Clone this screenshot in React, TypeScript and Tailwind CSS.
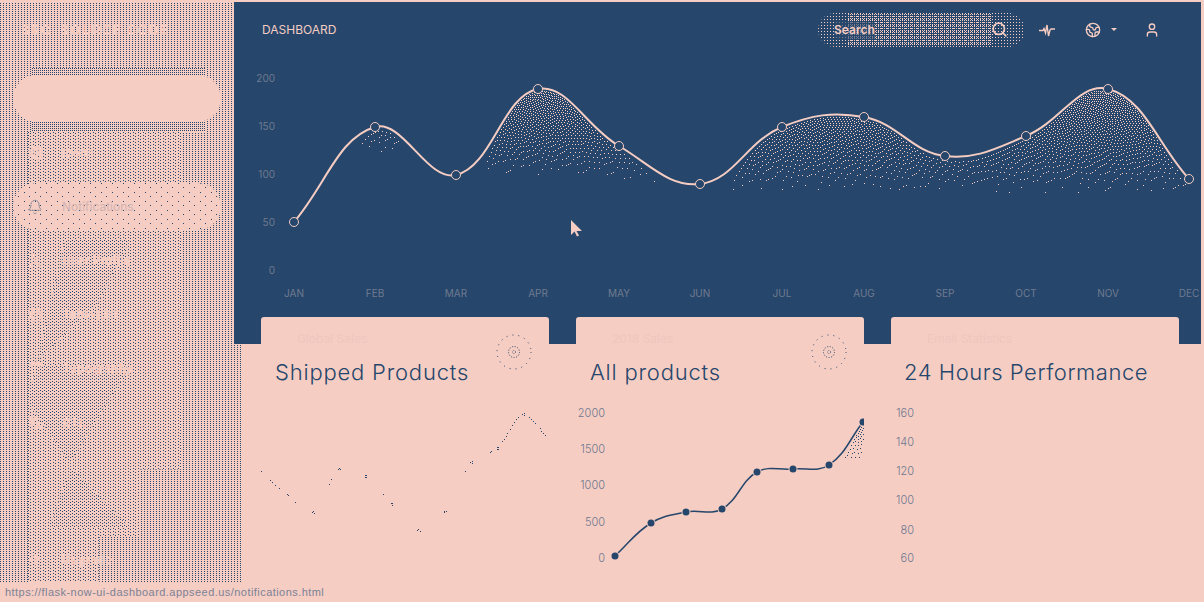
import { ArrowUp, Atom, Bell, Earth, LayoutList, Search, Type, User, Languages } from "lucide-react";

type P = [number, number];

const NAVY = "#26466b";
const PINK = "#f5cdc3";
const MUTED = "#6f7a8f";

const months = ["JAN", "FEB", "MAR", "APR", "MAY", "JUN", "JUL", "AUG", "SEP", "OCT", "NOV", "DEC"];
const salesX = [294, 375, 456, 538, 619, 700, 782, 864, 945, 1026, 1108, 1189];
const salesY = [222, 127, 175, 89, 146, 184, 127, 117, 156, 136, 89, 179];
const salesPts: P[] = salesX.map((x, i) => [x, salesY[i]]);

const productPts: P[] = [
  [615, 556], [651, 523], [686, 512], [722, 509], [757, 472], [793, 469], [829, 465], [863, 422],
];

// dots that survive of the first card's line, read off the reference (page coords)
const shippedDots: P[] = [
  [261, 471], [270, 480], [272, 482], [275, 485], [279, 488], [287, 494], [288, 495], [295, 502],
  [312, 512], [313, 511], [314, 513], [329, 484], [331, 479], [339, 468], [338, 469], [340, 469],
  [365, 475], [366, 475], [365, 477], [366, 477], [383, 494], [391, 503], [392, 503], [392, 505],
  [417, 530], [418, 529], [420, 531], [444, 511], [444, 512], [446, 511], [465, 471], [470, 462],
  [472, 461], [472, 463], [490, 452], [491, 451], [497, 447], [497, 449], [498, 447], [498, 449],
  [502, 441], [504, 439], [506, 436], [507, 433], [510, 429], [512, 425], [514, 422], [516, 419],
  [518, 417], [522, 414], [524, 413], [524, 415], [529, 417], [531, 419], [533, 421], [535, 423],
  [540, 428], [541, 431], [543, 433], [545, 435],
];

// chart.js style bezier, tension 0.4
function controls(pts: P[], t = 0.4) {
  return pts.map((p, i) => {
    const a = pts[i - 1] ?? p;
    const b = pts[i + 1] ?? p;
    const d01 = Math.hypot(p[0] - a[0], p[1] - a[1]);
    const d12 = Math.hypot(b[0] - p[0], b[1] - p[1]);
    const sum = d01 + d12 || 1;
    const fa = (t * d01) / sum;
    const fb = (t * d12) / sum;
    return {
      prev: [p[0] - fa * (b[0] - a[0]), p[1] - fa * (b[1] - a[1])] as P,
      next: [p[0] + fb * (b[0] - a[0]), p[1] + fb * (b[1] - a[1])] as P,
    };
  });
}

function curvePath(pts: P[]) {
  const c = controls(pts);
  let d = `M${pts[0][0]} ${pts[0][1]}`;
  for (let i = 1; i < pts.length; i++) {
    d += `C${c[i - 1].next[0]} ${c[i - 1].next[1]} ${c[i].prev[0]} ${c[i].prev[1]} ${pts[i][0]} ${pts[i][1]}`;
  }
  return d;
}

function curveHeights(pts: P[]) {
  const c = controls(pts);
  const ys: Record<number, number> = {};
  for (let i = 1; i < pts.length; i++) {
    const p0 = pts[i - 1];
    const p1 = c[i - 1].next;
    const p2 = c[i].prev;
    const p3 = pts[i];
    for (let s = 0; s <= 200; s++) {
      const t = s / 200;
      const u = 1 - t;
      const x = u * u * u * p0[0] + 3 * u * u * t * p1[0] + 3 * u * t * t * p2[0] + t * t * t * p3[0];
      const y = u * u * u * p0[1] + 3 * u * u * t * p1[1] + 3 * u * t * t * p2[1] + t * t * t * p3[1];
      ys[Math.round(x)] = y;
    }
  }
  return ys;
}

// error diffusion, the fill under a line is stippled in the picture
function stipple(pts: P[], y0: number, y1: number, density: (x: number, y: number) => number) {
  const top = curveHeights(pts);
  const x0 = pts[0][0];
  const x1 = pts[pts.length - 1][0];
  const w = x1 - x0 + 3;
  let row = new Array(w).fill(0);
  let below = new Array(w).fill(0);
  let d = "";
  for (let y = y0; y < y1; y++) {
    for (let i = 1; i < w - 1; i++) {
      const x = x0 + i - 1;
      const h = top[x];
      const want = h !== undefined && y > h + 1 ? density(x, y) : 0;
      if (want <= 0) continue;
      const v = want + row[i];
      const on = v > 0.5;
      if (on) d += `M${x} ${y}h1v1h-1z`;
      const e = v - (on ? 1 : 0);
      row[i + 1] += (e * 7) / 16;
      below[i - 1] += (e * 3) / 16;
      below[i] += (e * 5) / 16;
      below[i + 1] += e / 16;
    }
    row = below;
    below = new Array(w).fill(0);
  }
  return d;
}

function lerp(stops: P[], x: number) {
  if (x <= stops[0][0]) return stops[0][1];
  for (let i = 1; i < stops.length; i++) {
    if (x <= stops[i][0]) {
      const t = (x - stops[i - 1][0]) / (stops[i][0] - stops[i - 1][0]);
      return stops[i - 1][1] + t * (stops[i][1] - stops[i - 1][1]);
    }
  }
  return stops[stops.length - 1][1];
}

const fadeStops: P[] = [[294, 150], [390, 156], [450, 158], [480, 178], [620, 184], [700, 195], [1189, 198]];

const salesFill = stipple(salesPts, 85, 200, (x, y) => {
  const end = lerp(fadeStops, x);
  return 0.27 * Math.pow(Math.max(0, (end - y) / (end - 88)), 1.25);
});

const productFill = stipple(productPts, 420, 458, (x, y) => (x < 842 ? 0 : 0.28 * Math.max(0.25, (458 - y) / 38)));

function SalesChart() {
  return (
    <svg viewBox="234 62 967 282" className="block w-[967px] h-[282px]">
      <path d={salesFill} fill={PINK} shapeRendering="crispEdges" />
      <path d={curvePath(salesPts)} fill="none" stroke={PINK} strokeWidth="2" />
      {salesPts.map(([x, y]) => (
        <circle key={x} cx={x} cy={y} r="4.5" fill={NAVY} stroke={PINK} strokeWidth="1" />
      ))}
      {[200, 150, 100, 50, 0].map((v, i) => (
        <text key={v} x="275" y={82 + i * 48} textAnchor="end" fontSize="10" fill={MUTED} fontFamily="Inter, sans-serif">
          {v}
        </text>
      ))}
      {months.map((m, i) => (
        <text key={m} x={salesX[i]} y="297" textAnchor="middle" fontSize="10" fill={MUTED} fontFamily="Inter, sans-serif">
          {m}
        </text>
      ))}
    </svg>
  );
}

function AxisLabels({ x, ticks }: { x: number; ticks: [string, number][] }) {
  return (
    <>
      {ticks.map(([t, y]) => (
        <text key={t} x={x} y={y + 4} textAnchor="end" fontSize="11" fontWeight="300" fill="#6d7890" fontFamily="Inter, sans-serif">
          {t}
        </text>
      ))}
    </>
  );
}

function GearRing() {
  return (
    <svg viewBox="0 0 36 36" className="absolute right-[17px] top-[17px] w-[36px] h-[36px]">
      <circle cx="18" cy="18" r="17" fill="none" stroke={NAVY} strokeWidth="1" strokeDasharray="1 5" />
      <circle cx="18" cy="18" r="5.5" fill="none" stroke={NAVY} strokeWidth="1" strokeDasharray="1 1.6" />
      <circle cx="18" cy="18" r="1.6" fill="none" stroke={NAVY} strokeWidth="0.7" strokeDasharray="1 1" />
    </svg>
  );
}

function Card({ category, title, titleClass, gear, children }: { category: string; title: string; titleClass: string; gear?: boolean; children?: React.ReactNode }) {
  return (
    <section className="relative w-[288px] rounded-t-[3px] bg-[#f5cdc3] pl-[14px] pt-[15px]">
      <p className="h-[14px] text-[12px] leading-[14px] text-[#efc7be] pl-[22px]" style={{ fontFamily: "Inter, sans-serif" }}>
        {category}
      </p>
      <h2 className={titleClass} style={{ fontFamily: "Inter, sans-serif" }}>
        {title}
      </h2>
      {gear && <GearRing />}
      {children}
    </section>
  );
}

const navItems = [
  { label: "Icons", icon: Atom },
  { label: "Notifications", icon: Bell, hover: true },
  { label: "User Profile", icon: User },
  { label: "Table List", icon: LayoutList },
  { label: "Typography", icon: Type },
  { label: "RTL", icon: Languages },
];

function App() {
  return (
    <div className="relative w-[1204px] h-[602px] overflow-hidden bg-[#f5cdc3] text-[#f5cdc3]" style={{ fontFamily: "Inter, 'Liberation Sans', sans-serif" }}>
      <div className="flex h-[582px]">
        <aside className="relative mt-[3px] w-[241px] shrink-0 flex flex-col pl-[13px] pr-[20px] bg-[conic-gradient(at_1px_1px,transparent_75%,#26466b_0)] bg-[length:3px_2px]">
          {/* stippled middle of the sidebar, staggered instead of square */}
          <div className="absolute left-[28px] top-[129px] w-[155px] h-[450px] bg-[#f5cdc3] [clip-path:polygon(0_0,100%_0,100%_75%,72%_75%,72%_90%,46%_90%,46%_100%,0_100%)]">
            <div className="h-full w-full bg-[conic-gradient(at_1px_1px,transparent_75%,#26466b_0),conic-gradient(at_1px_1px,transparent_75%,#26466b_0)] bg-[length:5px_3px] bg-[position:0_0,2px_1px]" />
            {/* denser wedges inside it */}
            <div className="absolute inset-0 bg-[#f5cdc3] [clip-path:polygon(24%_24%,66%_24%,45%_38%,2%_52%,66%_52%,26%_74%,66%_88%,14%_88%,28%_74%,0_60%)]">
              <div className="h-full w-full bg-[conic-gradient(at_1px_1px,transparent_75%,#26466b_0),conic-gradient(at_1px_1px,transparent_75%,#26466b_0)] bg-[length:4px_3px] bg-[position:0_0,2px_1px]" />
            </div>
          </div>

          <div className="relative h-[72px] ml-[8px] pt-[19px] text-[13px] leading-[16px] font-bold tracking-[1.3px] whitespace-nowrap">
            SRC &nbsp;SOURCE CODE
          </div>

          <nav className="relative flex flex-1 flex-col gap-[7px]">
            <div className="relative h-[47px]">
              <div className="absolute -top-[7px] -bottom-[10px] left-[19px] right-[16px] bg-[#f5cdc3] bg-[conic-gradient(at_1px_1px,transparent_75%,#26466b_0)] bg-[length:2px_2px]" />
              <div aria-label="Dashboard" className="relative h-full rounded-full bg-[#f5cdc3]" />
            </div>

            {navItems.map((item) => {
              const Icon = item.icon;
              return (
                <a
                  key={item.label}
                  className={
                    item.hover
                      ? "flex h-[47px] items-center gap-[19px] rounded-full pl-[14px] text-[12px] font-normal text-[#d3b3b1] bg-[#f5cdc3] bg-[conic-gradient(at_1px_1px,transparent_75%,#26466b_0),conic-gradient(at_1px_1px,transparent_75%,#26466b_0)] bg-[length:11px_9px] bg-[position:0_0,5px_4px]"
                      : "flex h-[47px] items-center gap-[19px] pl-[14px] text-[12px] font-bold"
                  }
                >
                  {item.hover ? (
                    <Icon size={16} strokeWidth={1} stroke={NAVY} strokeDasharray="1 2" />
                  ) : (
                    <Icon size={16} strokeWidth={2.5} />
                  )}
                  <span>{item.label}</span>
                </a>
              );
            })}

            <a className="mt-auto flex h-[44px] items-center gap-[19px] pl-[14px] text-[12px] font-bold">
              <ArrowUp size={16} strokeWidth={2.5} />
              <span>Upgrade</span>
            </a>
          </nav>
        </aside>

        <div className="relative -ml-[7px] flex-1 min-w-0 pr-[3px] pt-[2px]">
          <main className="h-[342px] bg-[#26466b]">
            <header className="flex h-[60px] items-center pl-[28px] pr-[41px]">
              <span className="mt-[-5px] text-[12px] font-normal">DASHBOARD</span>
              <div className="relative ml-auto h-[34px] w-[207px] rounded-full bg-[conic-gradient(at_1px_1px,transparent_75%,#f5cdc3_0)] bg-[length:3px_3px] mt-[-5px]">
                <div className="absolute inset-y-[1px] left-[30px] right-[34px] bg-[conic-gradient(at_1px_1px,transparent_75%,#f5cdc3_0)] bg-[length:2px_2px]" />
                <span className="absolute left-[16px] top-[8px] text-[12px] font-semibold bg-[#26466b]/60">Search</span>
                <Search size={17} strokeWidth={2.4} className="absolute right-[17px] top-[8px]" />
              </div>
              <div className="mt-[-5px] ml-[14px] flex items-center">
                <svg viewBox="0 0 16 16" className="w-[16px] h-[16px]" fill="none" stroke={PINK} strokeWidth="1.4">
                  <path d="M0 8.5h4l1-2 1.5 4.500 1.500-8 1.500 11 1.500-6 1-1h4" />
                </svg>
                <Earth size={16} strokeWidth={2} className="ml-[30px]" />
                <span className="ml-[10px] mt-[-1px] h-0 w-0 border-x-[3px] border-t-[3px] border-x-transparent border-t-[#f5cdc3]" />
                <User size={16} strokeWidth={2} className="ml-[27px]" />
              </div>
            </header>
            <SalesChart />
          </main>

          <div className="relative -mt-[27px] flex h-[265px] gap-[27px] pl-[27px]">
            <Card
              category="Global Sales"
              title="Shipped Products"
              titleClass="mt-[10px] whitespace-nowrap text-[22px] leading-[32px] font-light tracking-[0.8px] text-[#26466b]"
              gear
            >
              <svg viewBox="261 395 288 175" className="absolute left-0 top-[78px] w-[288px] h-[175px]">
                {shippedDots.map(([x, y]) => (
                  <rect key={`${x}-${y}`} x={x} y={y} width="1" height="1" fill={NAVY} shapeRendering="crispEdges" />
                ))}
              </svg>
            </Card>

            <Card
              category="2018 Sales"
              title="All products"
              titleClass="mt-[10px] whitespace-nowrap text-[22px] leading-[32px] font-light tracking-[0.8px] text-[#26466b]"
              gear
            >
              <svg viewBox="576 395 288 175" className="absolute left-0 top-[78px] w-[288px] h-[175px]">
                <path d={productFill} fill={NAVY} shapeRendering="crispEdges" />
                <path d={curvePath(productPts)} fill="none" stroke={NAVY} strokeWidth="1.5" />
                {productPts.map(([x, y]) => (
                  <circle key={x} cx={x} cy={y} r="3.5" fill={NAVY} stroke={PINK} strokeWidth="2" paintOrder="stroke" />
                ))}
                <AxisLabels x={605} ticks={[["2000", 413], ["1500", 449], ["1000", 485], ["500", 522], ["0", 558]]} />
              </svg>
            </Card>

            <Card
              category="Email Statistics"
              title="24 Hours Performance"
              titleClass="-ml-[1px] mt-[10px] whitespace-nowrap text-[22px] leading-[32px] font-light tracking-[0.55px] text-[#26466b]"
            >
              <svg viewBox="891 395 288 175" className="absolute left-0 top-[78px] w-[288px] h-[175px]">
                <AxisLabels x={914} ticks={[["160", 413], ["140", 442], ["120", 471], ["100", 500], ["80", 530], ["60", 558]]} />
              </svg>
            </Card>
          </div>
        </div>
      </div>

      <div className="h-[20px] pl-[5px] text-[11px] leading-[20px] tracking-[0.45px] text-[#7c8296]" style={{ fontFamily: "'Liberation Sans', sans-serif" }}>
        https://flask-now-ui-dashboard.appseed.us/notifications.html
      </div>

      {/* mouse pointer caught in the screenshot */}
      <svg viewBox="0 0 12 17" className="absolute left-[571px] top-[220px] w-[12px] h-[17px]">
        <path d="M0 0v15l3.5-3.500 2.500 5 2-1-2.500-4.600H11z" fill={PINK} />
      </svg>
    </div>
  );
}

export default App;
